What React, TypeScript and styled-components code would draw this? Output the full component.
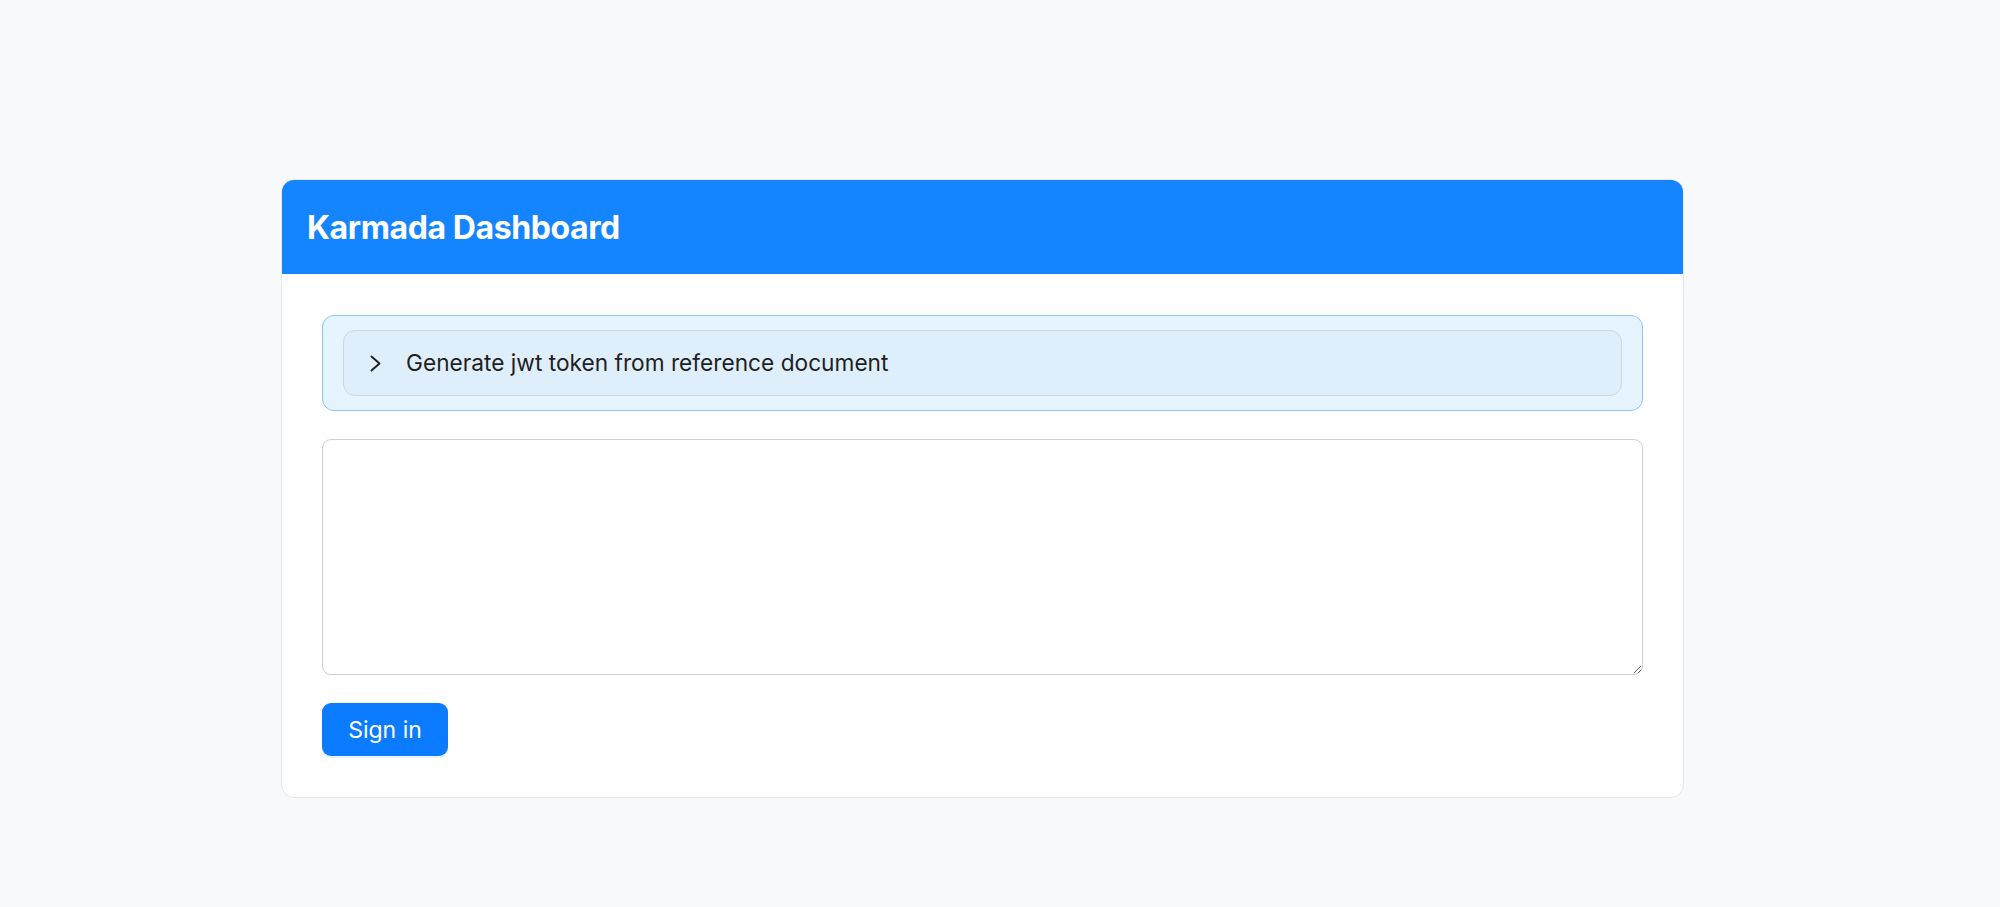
import React from "react";
import styled, { createGlobalStyle } from "styled-components";

const Global = createGlobalStyle`
  html, body { margin: 0; padding: 0; background: #f8f9fb; }
  body { font-family: Inter, "Noto Sans", "Liberation Sans", sans-serif; }
  * { box-sizing: border-box; }
`;

const Page = styled.div`
  min-height: 907px;
  padding: 179px 0 0 281px;
`;

const Card = styled.div`
  width: 1403px;
  background: #ffffff;
  border: 1px solid #e6e7ea;
  border-radius: 13px;
  overflow: hidden;
`;

const Header = styled.div`
  height: 95px;
  background: #1485ff;
  display: flex;
  align-items: center;
  padding: 0 26px;
  margin: -1px -1px 0;
`;

const Title = styled.h1`
  margin: 0;
  color: #ffffff;
  font-family: Inter, "Liberation Sans", sans-serif;
  font-size: 32px;
  font-weight: 700;
  letter-spacing: -0.4px;
  padding-top: 2px;
`;

const Body = styled.div`
  padding: 41px 40px 41px;
  display: flex;
  flex-direction: column;
  gap: 28px;
`;

const Alert = styled.div`
  background: #e6f4ff;
  border: 1px solid #8cc6ff;
  border-radius: 12px;
  padding: 14px 20px;
`;

const Collapse = styled.div`
  height: 66px;
  background: #deeefa;
  border: 1px solid #d2d5d9;
  border-radius: 12px;
  display: flex;
  align-items: center;
  padding: 0 0 0 25px;
  gap: 24px;
  color: #1f1f1f;
  font-size: 22.7px;
  cursor: pointer;
`;

const Label = styled.span`
  line-height: 1;
  padding-top: 1px;
`;

const TextArea = styled.textarea`
  display: block;
  width: 100%;
  height: 236px;
  border: 1px solid #cfcfcf;
  border-radius: 9px;
  padding: 10px 14px;
  font-family: Inter, "Liberation Sans", sans-serif;
  font-size: 22px;
  outline: none;
  resize: vertical;
  background: #ffffff;
`;

const Button = styled.button`
  align-self: flex-start;
  width: 126px;
  height: 53px;
  border: none;
  border-radius: 9px;
  background: #0b7bff;
  color: #ffffff;
  font-family: Inter, "Liberation Sans", sans-serif;
  font-size: 23px;
  font-weight: 400;
  cursor: pointer;
  box-shadow: 0 2px 0 rgba(5, 145, 255, 0.1);
`;

const Chevron = () => (
  <svg width="13" height="17" viewBox="0 0 13 17" fill="none">
    <path d="M2.5 1.5 L10.5 8.5 L2.5 15.5" stroke="#1f1f1f" strokeWidth="1.9" strokeLinecap="round" strokeLinejoin="round" />
  </svg>
);

export default function App() {
  return (
    <>
      <Global />
      <Page>
        <Card>
          <Header>
            <Title>Karmada Dashboard</Title>
          </Header>
          <Body>
            <Alert>
              <Collapse>
                <Chevron />
                <Label>Generate jwt token from reference document</Label>
              </Collapse>
            </Alert>
            <TextArea />
            <Button>Sign in</Button>
          </Body>
        </Card>
      </Page>
    </>
  );
}
